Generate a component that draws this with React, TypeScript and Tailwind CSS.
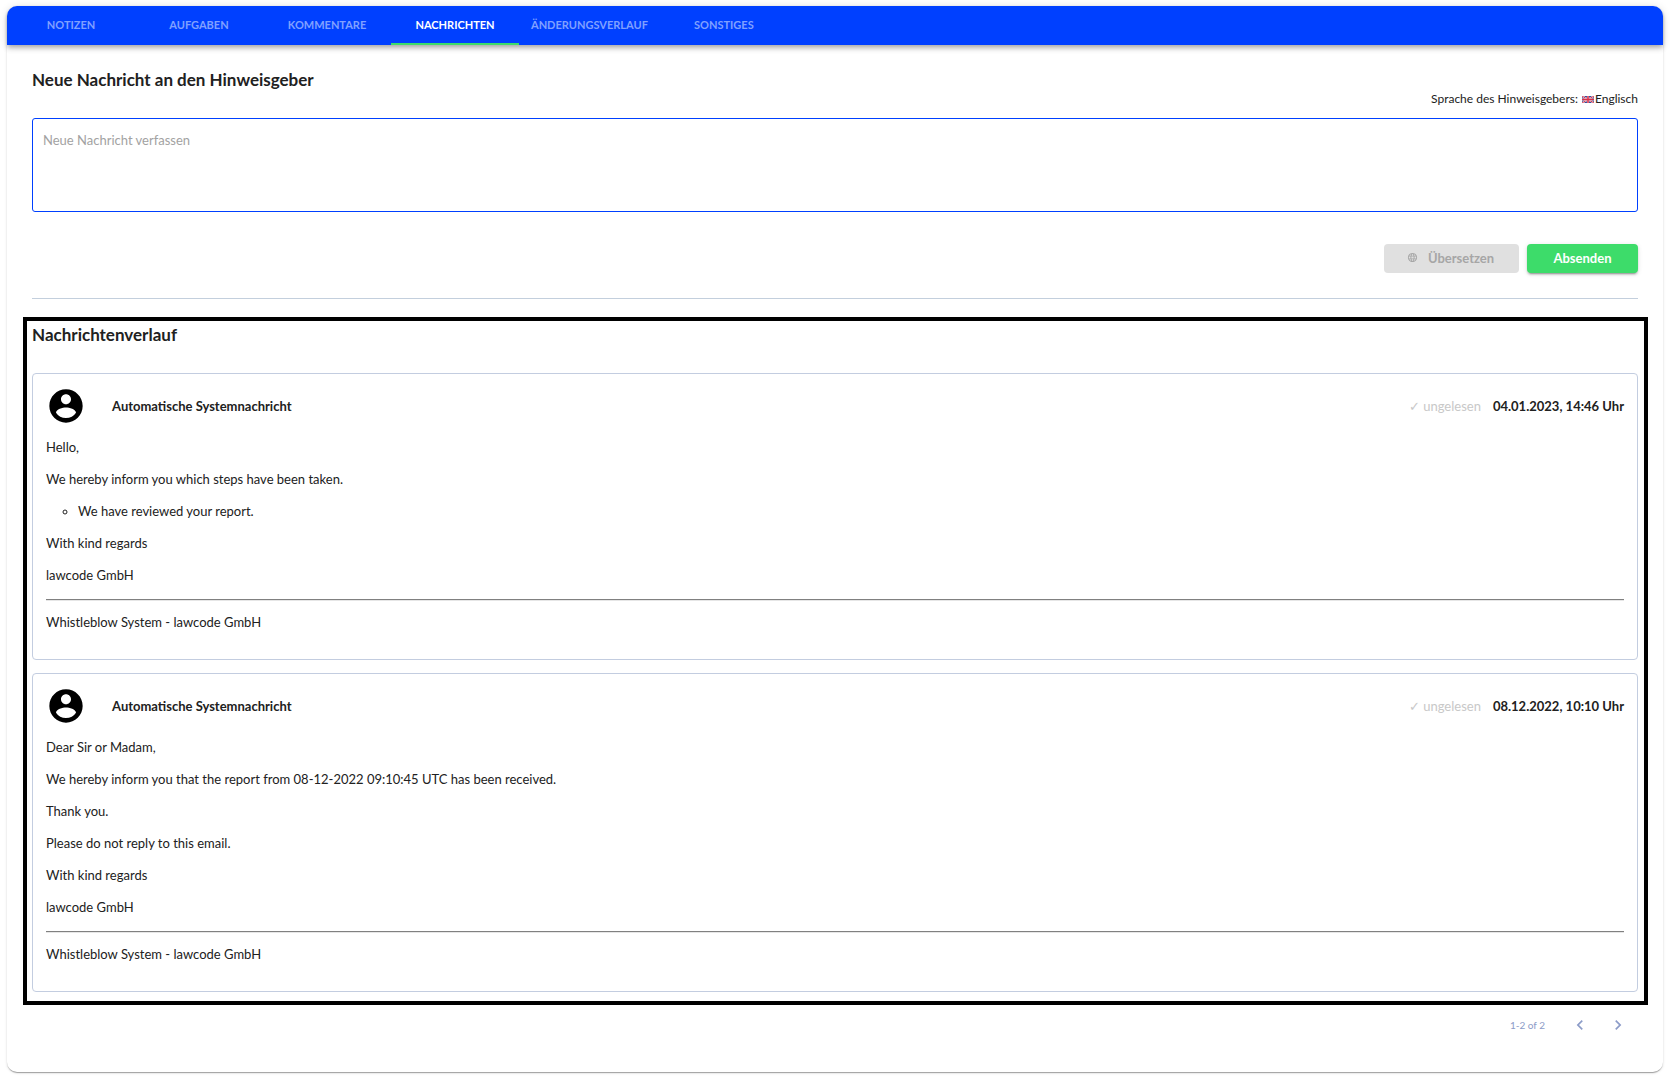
import { useState } from "react";
import type { ReactNode } from "react";
import { MdChevronLeft, MdChevronRight, MdLanguage } from "react-icons/md";

const tabs = [
  "Notizen",
  "Aufgaben",
  "Kommentare",
  "Nachrichten",
  "Änderungsverlauf",
  "Sonstiges",
];

function AccountIcon() {
  return (
    <svg viewBox="0 0 24 24" className="size-10 fill-black" aria-hidden="true">
      <path d="M12 2C6.48 2 2 6.48 2 12s4.48 10 10 10 10-4.48 10-10S17.52 2 12 2zm0 3c1.66 0 3 1.34 3 3s-1.34 3-3 3-3-1.34-3-3 1.34-3 3-3zm0 14.2c-2.5 0-4.71-1.28-6-3.22.03-1.99 4-3.08 6-3.08 1.99 0 5.97 1.09 6 3.08-1.29 1.94-3.5 3.22-6 3.22z" />
    </svg>
  );
}

function FlagGB() {
  return (
    <svg viewBox="0 0 60 36" className="h-[7px] w-3" preserveAspectRatio="none" aria-hidden="true">
      <rect width="60" height="36" fill="#2b3f8f" />
      <path d="M0 0 60 36M60 0 0 36" stroke="#fff" strokeWidth="9" />
      <path d="M0 0 60 36M60 0 0 36" stroke="#d8304a" strokeWidth="5" />
      <path d="M30 0v36M0 18h60" stroke="#fff" strokeWidth="11" />
      <path d="M30 0v36M0 18h60" stroke="#d8304a" strokeWidth="8" />
    </svg>
  );
}

function Message({ date, children }: { date: string; children: ReactNode }) {
  return (
    <article className="rounded border border-[#c3cde0] px-[13px] pt-3 pb-[27px]">
      <header className="mb-[11px] flex items-center">
        <AccountIcon />
        <h3 className="ml-[26px] font-bold">Automatische Systemnachricht</h3>
        <span className="ml-auto text-[#c8c8c8]">✓ ungelesen</span>
        <time className="ml-3 font-bold">{date}</time>
      </header>
      <div className="flex flex-col gap-3">{children}</div>
      <hr className="mt-[14px] mb-[11px] border-t border-b border-t-[#808080] border-b-[#e6e6e6]" />
      <p>Whistleblow System - lawcode GmbH</p>
    </article>
  );
}

export default function App() {
  const [active, setActive] = useState("Nachrichten");
  const [draft, setDraft] = useState("");

  return (
    <main className="min-h-screen bg-white px-[7px] py-1.5 font-['Lato',sans-serif] text-[13px] leading-5 text-[#212121]">
      <div className="rounded-[10px] pb-[37px] shadow-[0_2px_1px_-1px_rgba(0,0,0,0.2),0_1px_1px_rgba(0,0,0,0.14),0_1px_3px_rgba(0,0,0,0.12)]">
        <nav
          role="tablist"
          className="flex h-[39px] rounded-t-[10px] bg-[#0040ff] shadow-[0_2px_4px_-1px_rgba(0,0,0,0.2),0_4px_5px_rgba(0,0,0,0.14),0_1px_10px_rgba(0,0,0,0.12)]"
        >
          {tabs.map((tab) => (
            <button
              key={tab}
              role="tab"
              aria-selected={tab === active}
              onClick={() => setActive(tab)}
              className={
                tab === active
                  ? "min-w-32 border-b-2 border-[#3ddc6a] px-3 text-[11px] font-bold text-white uppercase"
                  : "min-w-32 border-b-2 border-transparent px-3 text-[11px] font-bold text-[#80a0ff] uppercase"
              }
            >
              {tab}
            </button>
          ))}
        </nav>

        <div className="px-[25px]">
          <section className="border-b border-[#c3cfdd] pt-[23px] pb-[25px]">
            <h2 className="text-[17px] leading-6 font-bold">
              <label htmlFor="draft">Neue Nachricht an den Hinweisgeber</label>
            </h2>
            <div className="mb-3 flex items-center justify-end text-xs leading-[14px]">
              <span>Sprache des Hinweisgebers:</span>
              <span className="ml-1 flex items-center gap-px">
                <FlagGB />
                Englisch
              </span>
            </div>
            <textarea
              id="draft"
              value={draft}
              onChange={(e) => setDraft(e.target.value)}
              placeholder="Neue Nachricht verfassen"
              className="block h-[94px] w-full resize-none rounded-[3px] border border-[#0040ff] px-[10px] py-[11px] outline-none placeholder:text-[#a2a2a2]"
            />
            <div className="mt-8 flex justify-end gap-2">
              <button
                disabled
                className="flex h-[29px] w-[135px] items-center justify-center gap-[10px] rounded bg-[#e0e0e0] pr-0.5 pb-0.5 font-bold text-[#a6a6a6]"
              >
                <MdLanguage className="size-[11px]" />
                Übersetzen
              </button>
              <button className="h-[29px] w-[111px] rounded bg-[#3ddc6a] pb-0.5 font-bold text-white shadow-[0_3px_1px_-2px_rgba(0,0,0,0.2),0_2px_2px_rgba(0,0,0,0.14),0_1px_5px_rgba(0,0,0,0.12)]">
                Absenden
              </button>
            </div>
          </section>

          <section className="-mr-[10px] -ml-[9px] mt-[18px] border-4 border-black pt-[2px] pr-1.5 pb-[9px] pl-[5px]">
            <h2 className="mb-[26px] text-[17px] leading-6 font-bold">Nachrichtenverlauf</h2>
            <div className="flex flex-col gap-[13px]">
              <Message date="04.01.2023, 14:46 Uhr">
                <p>Hello,</p>
                <p>We hereby inform you which steps have been taken.</p>
                <ul className="list-[circle] pl-8">
                  <li>We have reviewed your report.</li>
                </ul>
                <p>With kind regards</p>
                <p>lawcode GmbH</p>
              </Message>
              <Message date="08.12.2022, 10:10 Uhr">
                <p>Dear Sir or Madam,</p>
                <p>We hereby inform you that the report from 08-12-2022 09:10:45 UTC has been received.</p>
                <p>Thank you.</p>
                <p>Please do not reply to this email.</p>
                <p>With kind regards</p>
                <p>lawcode GmbH</p>
              </Message>
            </div>
          </section>

          <footer className="mt-[10px] flex items-center justify-end pr-[10px] text-[#8c9cc8]">
            <span className="mr-[25px] text-[10px]">1-2 of 2</span>
            <button aria-label="Vorherige Seite" className="mr-[18px]">
              <MdChevronLeft className="size-5" />
            </button>
            <button aria-label="Nächste Seite">
              <MdChevronRight className="size-5" />
            </button>
          </footer>
        </div>
      </div>
    </main>
  );
}
